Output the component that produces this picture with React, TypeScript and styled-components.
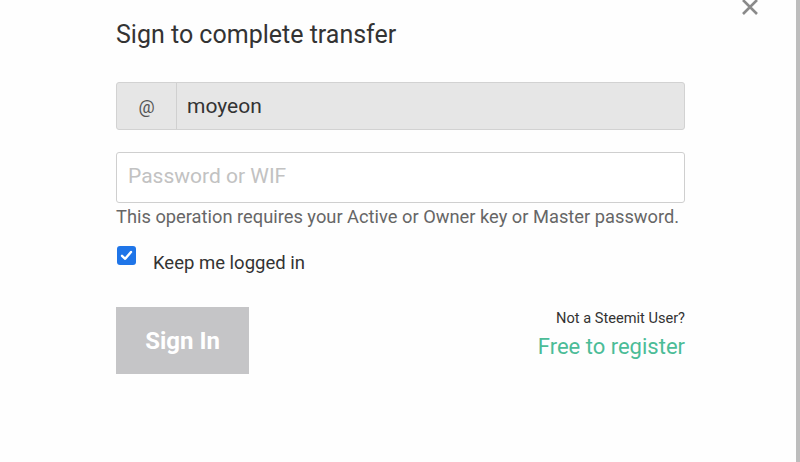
import React from "react";
import styled, { createGlobalStyle } from "styled-components";

const Global = createGlobalStyle`
  html, body { margin: 0; padding: 0; background: #fefefe; }
  body { font-family: Roboto, "Liberation Sans", Arial, sans-serif; }
  * { box-sizing: border-box; }
`;

const Page = styled.div`
  display: flex;
  width: 800px;
  height: 462px;
  overflow: hidden;
  position: relative;
`;

const Modal = styled.div`
  flex: 1;
  padding: 21px 111px 0 116px;
  display: flex;
  flex-direction: column;
`;

const ScrollStrip = styled.div`
  width: 4px;
  background: #bdbdbd;
`;

const CloseButton = styled.div`
  position: absolute;
  top: -3px;
  left: 739px;
  width: 22px;
  height: 20px;
  display: flex;
  align-items: center;
  justify-content: center;
`;

const Title = styled.h1`
  margin: 0;
  font-size: 25px;
  font-weight: 400;
  line-height: 28px;
  color: #333;
`;

const InputGroup = styled.div`
  margin-top: 33px;
  display: flex;
  height: 48px;
  border: 1px solid #d2d2d2;
  border-radius: 3px;
  background: #e6e6e6;
`;

const Prefix = styled.div`
  width: 60px;
  display: flex;
  align-items: center;
  justify-content: center;
  border-right: 1px solid #d0d0d0;
  font-size: 18px;
  color: #555;
`;

const Username = styled.div`
  flex: 1;
  display: flex;
  align-items: center;
  padding-left: 10px;
  font-size: 21px;
  color: #333;
`;

const PasswordBox = styled.div`
  margin-top: 22px;
  height: 51px;
  border: 1px solid #cfcfcf;
  border-radius: 3px;
  display: flex;
  align-items: center;
  padding: 0 0 3px 11px;
  font-size: 21px;
  color: #c2c2c2;
  background: #fff;
`;

const Help = styled.div`
  margin-top: 2px;
  font-size: 18.3px;
  line-height: 24px;
  color: #666;
`;

const CheckRow = styled.div`
  margin-top: 17px;
  display: flex;
  align-items: flex-start;
  gap: 17px;
  font-size: 18.5px;
  color: #333;
`;

const CheckLabel = styled.span`
  padding-top: 6px;
  line-height: 22px;
`;

const Box = styled.div`
  width: 19px;
  height: 19px;
  margin-left: 1px;
  border-radius: 3px;
  background: #1f75e8;
  display: flex;
  align-items: center;
  justify-content: center;
`;

const Footer = styled.div`
  margin-top: 33px;
  display: flex;
  justify-content: space-between;
  align-items: flex-start;
`;

const SignIn = styled.div`
  width: 133px;
  height: 67px;
  background: #c5c5c7;
  color: #fff;
  font-weight: 700;
  font-size: 24px;
  display: flex;
  align-items: center;
  justify-content: center;
`;

const Register = styled.div`
  display: flex;
  flex-direction: column;
  align-items: flex-end;
  padding-top: 2px;
`;

const NotUser = styled.div`
  font-size: 14.6px;
  line-height: 18px;
  color: #333;
`;

const FreeLink = styled.div`
  margin-top: 7px;
  font-size: 22px;
  line-height: 26px;
  color: #4bbc97;
`;

export default function App() {
  return (
    <>
      <Global />
      <Page>
        <Modal>
          <Title>Sign to complete transfer</Title>
          <InputGroup>
            <Prefix>@</Prefix>
            <Username>moyeon</Username>
          </InputGroup>
          <PasswordBox>Password or WIF</PasswordBox>
          <Help>This operation requires your Active or Owner key or Master password.</Help>
          <CheckRow>
            <Box>
              <svg width="13" height="13" viewBox="0 0 13 13">
                <path d="M2 6.8 L5.2 9.8 L11 3" fill="none" stroke="#fff" strokeWidth="2.4" strokeLinecap="round" strokeLinejoin="round" />
              </svg>
            </Box>
            <CheckLabel>Keep me logged in</CheckLabel>
          </CheckRow>
          <Footer>
            <SignIn>Sign In</SignIn>
            <Register>
              <NotUser>Not a Steemit User?</NotUser>
              <FreeLink>Free to register</FreeLink>
            </Register>
          </Footer>
        </Modal>
        <ScrollStrip />
        <CloseButton>
          <svg width="18" height="18" viewBox="0 0 18 18">
            <path d="M2 2 L16 16 M16 2 L2 16" stroke="#8a8a8a" strokeWidth="2.6" />
          </svg>
        </CloseButton>
      </Page>
    </>
  );
}
